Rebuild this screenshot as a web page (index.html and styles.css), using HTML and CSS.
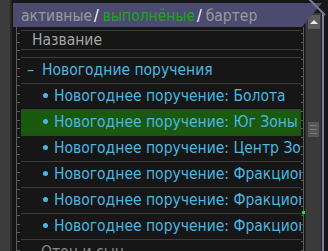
FILE: index.html
```html
<!DOCTYPE html>
<html lang="ru">
<head>
    <meta charset="UTF-8">
    <title>Задания</title>
    <link rel="stylesheet" href="styles.css">
</head>
<body>
    <div class="window">
        <div class="rail"></div>
        <div class="panel">
            <div class="tabs">
                <span class="tab">активные</span><span class="slash">/</span><span class="tab active">выполнёные</span><span class="slash">/</span><span class="tab">бартер</span>
            </div>
            <div class="body">
                <div class="ticks ticks-left"></div>
                <ul class="list">
                    <li class="head">Название</li>
                    <li class="spacer"></li>
                    <li class="group"><span class="dash">–</span>Новогодние поручения</li>
                    <li class="item"><span class="dot"></span>Новогоднее поручение: Болота</li>
                    <li class="item selected"><span class="dot"></span>Новогоднее поручение: Юг Зоны</li>
                    <li class="item"><span class="dot"></span>Новогоднее поручение: Центр Зоны</li>
                    <li class="item"><span class="dot"></span>Новогоднее поручение: Фракционное</li>
                    <li class="item"><span class="dot"></span>Новогоднее поручение: Фракционное</li>
                    <li class="item"><span class="dot"></span>Новогоднее поручение: Фракционное</li>
                    <li class="other">Отец и сын</li>
                </ul>
                <div class="ticks ticks-right"><span class="mark"></span></div>
            </div>
            <div class="scroll">
                <div class="arrow"></div>
                <div class="thumb"></div>
            </div>
            <div class="edge"></div>
        </div>
    </div>
</body>
</html>
```

FILE: styles.css
```css
html, body {
    margin: 0;
    padding: 0;
}
body {
    width: 328px;
    height: 251px;
    overflow: hidden;
    background: #161616;
    font-family: "DejaVu Sans Condensed", "DejaVu Sans", sans-serif;
}
.window {
    display: flex;
    height: 251px;
}
.rail {
    width: 10px;
    background: #3c3c3c;
    border-right: 2px solid #262626;
}
.panel {
    flex: 1;
    display: grid;
    grid-template-columns: 1fr 17px 6px;
    grid-template-rows: 27px 1fr;
    overflow: hidden;
}
.tabs {
    grid-column: 1 / 3;
    grid-row: 1;
    margin: 3px 0 0 1px;
    padding-left: 8px;
    height: 24px;
    background: #4b4b70;
    clip-path: polygon(0 0, 100% 0, calc(100% - 20px) 100%, 0 100%);
    font-size: 15.5px;
    line-height: 26px;
    white-space: nowrap;
}
.tab {
    color: #9a9a9a;
}
.tab.active {
    color: #1fa31f;
}
.slash {
    color: #fff;
    margin: 0 4px 0 2px;
}
.body {
    grid-column: 1;
    grid-row: 2;
    display: flex;
    overflow: hidden;
}
.ticks {
    width: 9px;
    background:
        linear-gradient(#5a5a5a, #5a5a5a) 4px 0 / 1px 100% no-repeat,
        repeating-linear-gradient(to bottom, #5a5a5a 0 1px, transparent 1px 8.67px) 4px 6px / 4px 100% no-repeat;
}
.ticks-right {
    width: 4px;
    background:
        linear-gradient(#5a5a5a, #5a5a5a) 2px 0 / 1px 100% no-repeat,
        repeating-linear-gradient(to bottom, #5a5a5a 0 1px, transparent 1px 8.67px) 0 6px / 3px 100% no-repeat;
}
.mark {
    display: block;
    width: 3px;
    height: 3px;
    margin: 184px 0 0 1px;
    background: #19e619;
}
.list {
    flex: 1;
    list-style: none;
    margin: 3px 0 0;
    padding: 0;
    border-top: 1px solid #3a3a3a;
    overflow: hidden;
    font-size: 15.5px;
    white-space: nowrap;
}
.list li {
    border-bottom: 1px solid #3a3a3a;
    overflow: hidden;
}
.head {
    height: 18px;
    line-height: 18px;
    padding-left: 11px;
    color: #a5a5a5;
}
.spacer {
    height: 7px;
}
.group, .item, .other {
    height: 25px;
    line-height: 25px;
    color: #4ab6e2;
}
.group {
    padding-left: 6px;
}
.dash {
    display: inline-block;
    width: 15px;
}
.item {
    padding-left: 22px;
}
.dot {
    display: inline-block;
    width: 5px;
    height: 5px;
    margin-right: 6px;
    border-radius: 50%;
    background: #4ab6e2;
    vertical-align: 3px;
}
.item.selected {
    background: #1a5a0e;
}
.other {
    padding-left: 20px;
    color: #8a8a8a;
}
.scroll {
    grid-column: 2;
    grid-row: 1 / 3;
    margin-top: 13px;
    background: #3a3a3a;
    border-left: 1px solid #2a2a2a;
    border-right: 1px solid #262626;
    display: flex;
    flex-direction: column;
    align-items: center;
}
.arrow {
    width: 12px;
    height: 14px;
    margin-top: 2px;
    background: #5c5c5c;
    display: flex;
    align-items: center;
    justify-content: center;
}
.arrow::before {
    content: "";
    border-left: 4px solid transparent;
    border-right: 4px solid transparent;
    border-bottom: 4px solid #e8e8e8;
}
.thumb {
    width: 11px;
    height: 15px;
    margin-top: 93px;
    background:
        repeating-linear-gradient(to bottom, transparent 0 3px, #7a7a7a 3px 4px) 2px 0 / 7px 14px no-repeat,
        #555;
}
.edge {
    grid-column: 3;
    grid-row: 1 / 3;
    margin-top: 14px;
    border-left: 2px solid #7c7c98;
    position: relative;
}
.edge::before {
    content: "";
    position: absolute;
    left: -16px;
    top: -17px;
    width: 24px;
    height: 2px;
    background: #7c7c98;
    transform: rotate(45deg);
    transform-origin: left center;
}
```
